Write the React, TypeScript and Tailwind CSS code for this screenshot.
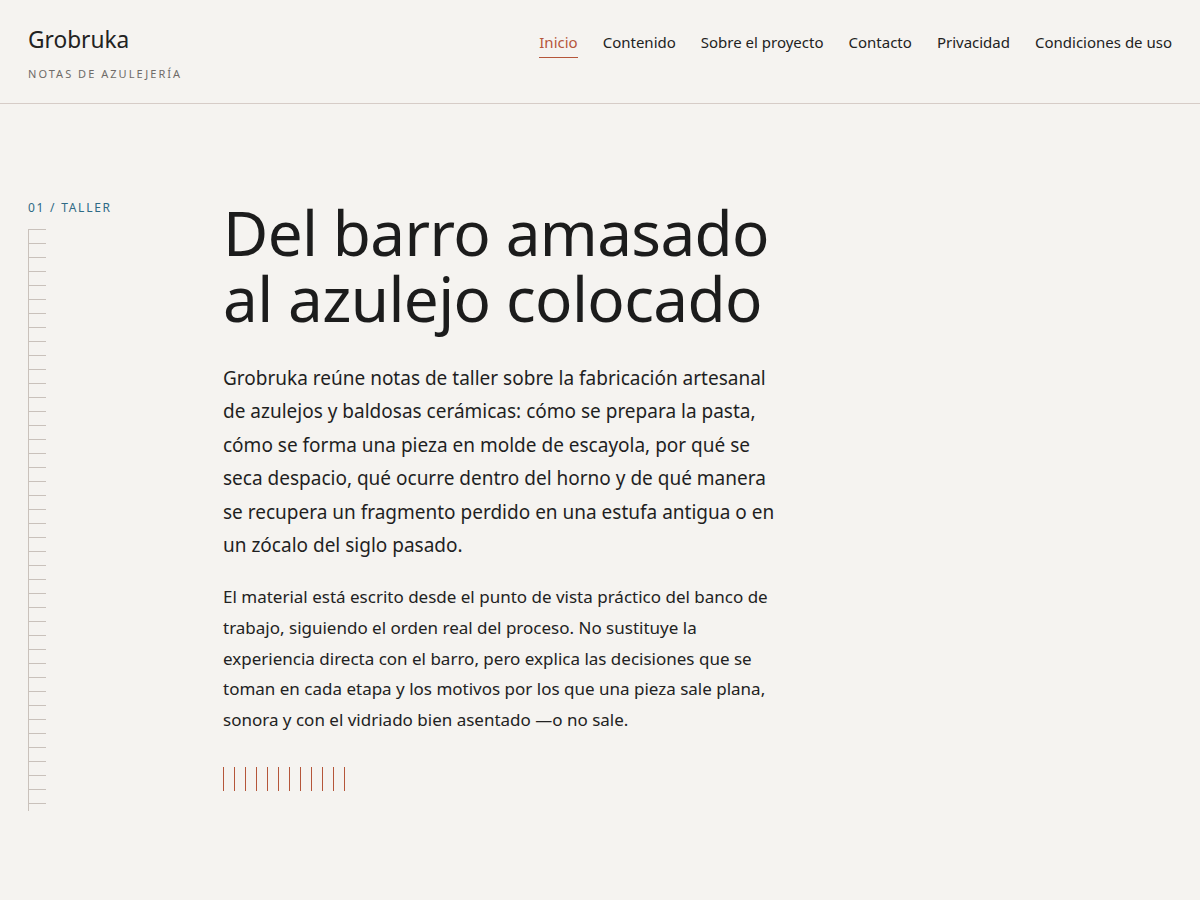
import React from 'react';

const navLinks = [
  { name: 'Inicio', active: true },
  { name: 'Contenido' },
  { name: 'Sobre el proyecto' },
  { name: 'Contacto' },
  { name: 'Privacidad' },
  { name: 'Condiciones de uso' },
];

export default function App() {
  const ticks = Array.from({ length: 42 });
  const bars = Array.from({ length: 12 });

  return (
    <div
      className="min-h-screen bg-[#f5f3f0] text-[#1d1d1d]"
      style={{ fontFamily: '"Noto Sans", "Open Sans", sans-serif' }}
    >
      {/* Header */}
      <header className="flex items-start justify-between border-b border-[#d6ccc7] px-7 pt-[26px] pb-[21px]">
        <div>
          <div className="text-[22.7px] leading-[28px] text-[#222]">Grobruka</div>
          <div className="mt-[12px] text-[11px] leading-[16px] tracking-[0.185em] text-[#6f6b68]">
            NOTAS DE AZULEJERÍA
          </div>
        </div>
        <nav className="flex gap-[25px] pt-[5px]">
          {navLinks.map((link) => (
            <a
              key={link.name}
              href="#"
              className={`border-b pb-[4px] text-[15px] leading-[22px] ${
                link.active ? 'border-[#b5563a] text-[#b5563a]' : 'border-transparent text-[#222]'
              }`}
            >
              {link.name}
            </a>
          ))}
        </nav>
      </header>

      {/* Main */}
      <main className="flex px-7 pt-[95px] pb-20">
        <aside className="w-[195px] shrink-0">
          <div className="text-[12px] leading-[18px] tracking-[0.145em] text-[#2e6a85]">01 / TALLER</div>
          <div className="mt-[12px] h-[582px] w-[18px] overflow-hidden border-l border-[#c9c1bb]">
            {ticks.map((_, i) => (
              <div key={i} className="h-[14px] border-t border-[#c9c1bb]" />
            ))}
          </div>
        </aside>

        <section className="w-[560px]">
          <h1 className="text-[62px] font-normal leading-[66px] tracking-[-0.01em] text-[#1c1c1c]">
            Del barro amasado
            <br />
            al azulejo colocado
          </h1>
          <p className="mt-[31px] text-[19px] leading-[33.4px] text-[#1f1f1f]">
            Grobruka reúne notas de taller sobre la fabricación artesanal de azulejos y baldosas
            cerámicas: cómo se prepara la pasta, cómo se forma una pieza en molde de escayola, por
            qué se seca despacio, qué ocurre dentro del horno y de qué manera se recupera un
            fragmento perdido en una estufa antigua o en un zócalo del siglo pasado.
          </p>
          <p className="mt-[20px] text-[17px] leading-[30.6px] text-[#222]">
            El material está escrito desde el punto de vista práctico del banco de trabajo,
            siguiendo el orden real del proceso. No sustituye la experiencia directa con el barro,
            pero explica las decisiones que se toman en cada etapa y los motivos por los que una
            pieza sale plana, sonora y con el vidriado bien asentado —o no sale.
          </p>
          <div className="mt-[32px] flex gap-[10px]">
            {bars.map((_, i) => (
              <div key={i} className="h-[24px] w-px bg-[#b5563a]" />
            ))}
          </div>
        </section>
      </main>
    </div>
  );
}
